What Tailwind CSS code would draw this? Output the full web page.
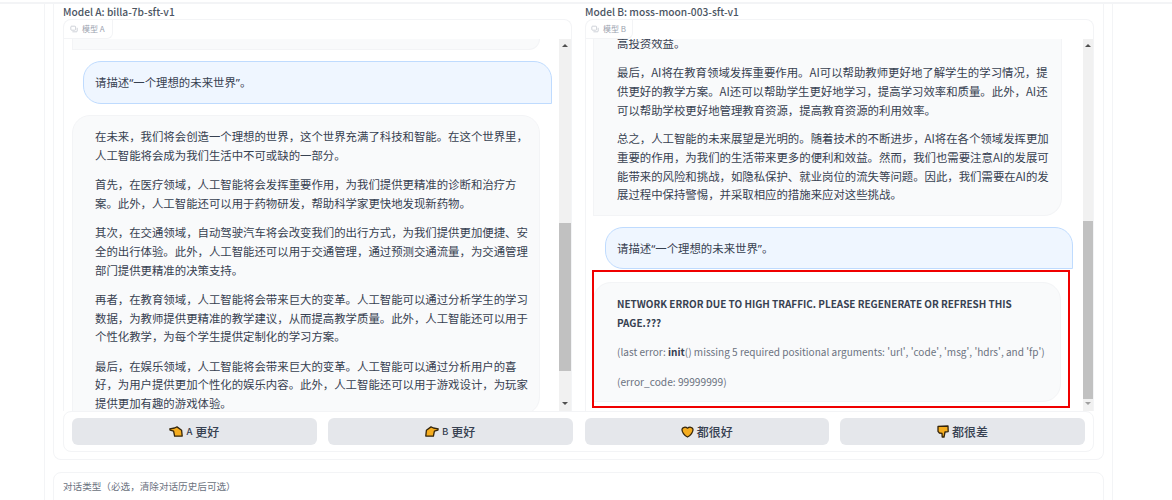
<!DOCTYPE html>
<html lang="zh-CN">
<head>
    <meta charset="UTF-8" />
    <title>Chatbot Arena</title>
    <script src="https://cdn.jsdelivr.net/npm/@tailwindcss/browser@4"></script>
</head>
<body class="bg-white h-[500px] overflow-hidden font-['Noto_Sans_CJK_SC','Noto_Sans',sans-serif] text-[#374151]">
    <div class="h-[2px]"></div>
    <div class="h-[2px] bg-[#f3f4f6]"></div>

    <div class="ml-[44px] w-[1069px] h-[496px] border-x border-[#f3f4f6] px-[8px]">
        <!-- Compare panel -->
        <div class="h-[456px] border border-t-0 border-[#f3f4f6] rounded-b-lg px-[9px]">
            <div class="flex gap-[13px]">
                <!-- Model A -->
                <div class="w-[509px]">
                    <div class="h-[15px] text-[10.2px] leading-[16px] font-medium text-[#4b5563]">Model A: billa-7b-sft-v1</div>
                    <div class="h-[392px] border border-b-0 border-[#f3f4f6] rounded-t-lg overflow-hidden">
                        <div class="flex items-center gap-[4px] w-[49px] h-[19px] border-r border-b border-[#f3f4f6] rounded-br-md pl-[6px] text-[8px] text-[#9ca3af]">
                            <svg class="w-[8px] h-[8px]" viewBox="0 0 10 10" fill="none" stroke="#c4c8cf" stroke-width="1"><rect x="1" y="1.5" width="6" height="5" rx="1" /><path d="M3 8.5h5a1 1 0 0 0 1-1v-4" /></svg>
                            <span>模型 A</span>
                        </div>
                        <div class="flex h-[373px]">
                            <div class="w-[496px] overflow-hidden px-[8px]">
                                <div class="w-[468px] h-[11px] bg-[#f9fafb] border border-t-0 border-[#f3f4f6] rounded-br-[18px]"></div>
                                <div class="ml-[11px] mt-[11px] w-[469px] h-[43px] flex items-center pl-[11px] pr-[12px] pt-px bg-[#eff6ff] border border-[#bfdbfe] rounded-[18px] rounded-br-none text-[11.4px]"><span>请描述<span class="font-['Noto_Sans']">“</span>一个理想的未来世界<span class="font-['Noto_Sans']">”</span>。</span></div>
                                <div class="mt-[11px] w-[468px] h-[300px] pt-[11px] pl-[22px] pr-[8px] bg-[#f9fafb] border border-[#f3f4f6] rounded-[18px] rounded-bl-none text-[11.4px] leading-[18.7px] flex flex-col gap-[10.7px]">
                                    <p>在未来，我们将会创造一个理想的世界，这个世界充满了科技和智能。在这个世界里，人工智能将会成为我们生活中不可或缺的一部分。</p>
                                    <p>首先，在医疗领域，人工智能将会发挥重要作用，为我们提供更精准的诊断和治疗方案。此外，人工智能还可以用于药物研发，帮助科学家更快地发现新药物。</p>
                                    <p>其次，在交通领域，自动驾驶汽车将会改变我们的出行方式，为我们提供更加便捷、安全的出行体验。此外，人工智能还可以用于交通管理，通过预测交通流量，为交通管理部门提供更精准的决策支持。</p>
                                    <p>再者，在教育领域，人工智能将会带来巨大的变革。人工智能可以通过分析学生的学习数据，为教师提供更精准的教学建议，从而提高教学质量。此外，人工智能还可以用于个性化教学，为每个学生提供定制化的学习方案。</p>
                                    <p>最后，在娱乐领域，人工智能将会带来巨大的变革。人工智能可以通过分析用户的喜好，为用户提供更加个性化的娱乐内容。此外，人工智能还可以用于游戏设计，为玩家提供更加有趣的游戏体验。</p>
                                </div>
                            </div>
                            <div class="w-[12px] ml-auto bg-[#f1f1f1] flex flex-col items-center">
                                <div class="mt-[5px] w-0 h-0 border-x-[3px] border-x-transparent border-b-[3px] border-b-[#505050]"></div>
                                <div class="mt-[176px] w-full h-[148px] bg-[#c1c1c1]"></div>
                                <div class="mt-[31px] w-0 h-0 border-x-[3px] border-x-transparent border-t-[3px] border-t-[#505050]"></div>
                            </div>
                        </div>
                    </div>
                </div>

                <!-- Model B -->
                <div class="w-[509px]">
                    <div class="h-[15px] text-[10.2px] leading-[16px] font-medium text-[#4b5563]">Model B: moss-moon-003-sft-v1</div>
                    <div class="h-[392px] border border-b-0 border-[#f3f4f6] rounded-t-lg overflow-hidden">
                        <div class="flex items-center gap-[4px] w-[47px] h-[19px] border-r border-b border-[#f3f4f6] rounded-br-md pl-[5px] text-[8px] text-[#9ca3af]">
                            <svg class="w-[8px] h-[8px]" viewBox="0 0 10 10" fill="none" stroke="#c4c8cf" stroke-width="1"><rect x="1" y="1.5" width="6" height="5" rx="1" /><path d="M3 8.5h5a1 1 0 0 0 1-1v-4" /></svg>
                            <span>模型 B</span>
                        </div>
                        <div class="relative flex h-[373px]">
                            <div class="w-[490px] overflow-hidden pl-[7px]">
                                <div class="w-[469px] h-[182px] pl-[23px] pr-[9px] bg-[#f9fafb] border-x border-b border-[#f3f4f6] rounded-b-[18px] rounded-bl-none text-[11.4px] leading-[18.7px] flex flex-col gap-[10.7px] -mt-[5px] overflow-hidden">
                                    <p>高投资效益。</p>
                                    <p>最后，AI将在教育领域发挥重要作用。AI可以帮助教师更好地了解学生的学习情况，提供更好的教学方案。AI还可以帮助学生更好地学习，提高学习效率和质量。此外，AI还可以帮助学校更好地管理教育资源，提高教育资源的利用效率。</p>
                                    <p class="-mt-px">总之，人工智能的未来展望是光明的。随着技术的不断进步，AI将在各个领域发挥更加重要的作用，为我们的生活带来更多的便利和效益。然而，我们也需要注意AI的发展可能带来的风险和挑战，如隐私保护、就业岗位的流失等问题。因此，我们需要在AI的发展过程中保持警惕，并采取相应的措施来应对这些挑战。</p>
                                </div>
                                <div class="ml-[12px] mt-[11px] w-[468px] h-[42px] flex items-center pl-[11px] pr-[12px] pt-[2px] bg-[#eff6ff] border border-[#bfdbfe] rounded-[18px] rounded-br-none text-[11.4px]"><span>请描述<span class="font-['Noto_Sans']">“</span>一个理想的未来世界<span class="font-['Noto_Sans']">”</span>。</span></div>
                                <div class="mt-[13px] w-[468px] h-[120px] pt-[12px] pl-[23px] pr-[7px] bg-[#f9fafb] border border-[#f3f4f6] rounded-[18px] rounded-bl-none text-[10.2px] leading-[18.7px]">
                                    <p class="text-[9.95px] font-semibold text-[#374151] pr-[30px]">NETWORK ERROR DUE TO HIGH TRAFFIC. PLEASE REGENERATE OR REFRESH THIS PAGE.???</p>
                                    <p class="mt-[11px] text-[10.05px] text-[#6b7280] whitespace-nowrap">(last error: <b class="font-semibold text-[#374151]">init</b>() missing 5 required positional arguments: 'url', 'code', 'msg', 'hdrs', and 'fp')</p>
                                    <p class="mt-[11px] text-[#6b7280]">(error_code: 99999999)</p>
                                </div>
                            </div>
                            <div class="w-[10px] ml-[8px] bg-[#f1f1f1] flex flex-col items-center">
                                <div class="mt-[5px] w-0 h-0 border-x-[3px] border-x-transparent border-b-[3px] border-b-[#505050]"></div>
                                <div class="mt-[174px] w-full h-[178px] bg-[#c1c1c1]"></div>
                                <div class="mt-[3px] w-0 h-0 border-x-[3px] border-x-transparent border-t-[3px] border-t-[#a0a0a0]"></div>
                            </div>
                            <!-- annotation over the error message -->
                            <div class="absolute left-[6px] top-[231px] w-[478px] h-[138px] border-2 border-[#f00000]"></div>
                        </div>
                    </div>
                </div>
            </div>

            <!-- Vote buttons -->
            <div class="h-[41px] border border-[#f3f4f6] rounded-lg flex items-center gap-[11px] px-[8px] bg-white">
                <button class="w-[245px] h-[27px] bg-[#e5e7eb] rounded-md flex items-center justify-center gap-[3px] font-medium">
                    <svg class="w-[14px] h-[11px]" viewBox="0 0 14 11"><path d="M.8 2.8 5.5 2 8 .9 12.6 4.2 13.2 10 5.6 10.2 4.6 5.2 1.2 4.2Z" fill="#f5ad1f" stroke="#33240a" stroke-width="1.3" stroke-linejoin="round" /></svg>
                    <span class="text-[9.5px]">A</span><span class="text-[12px]">更好</span>
                </button>
                <button class="w-[245px] h-[27px] bg-[#e5e7eb] rounded-md flex items-center justify-center gap-[3px] font-medium">
                    <svg class="w-[14px] h-[11px] -scale-x-100" viewBox="0 0 14 11"><path d="M.8 2.8 5.5 2 8 .9 12.6 4.2 13.2 10 5.6 10.2 4.6 5.2 1.2 4.2Z" fill="#f5ad1f" stroke="#33240a" stroke-width="1.3" stroke-linejoin="round" /></svg>
                    <span class="text-[9.5px]">B</span><span class="text-[12px]">更好</span>
                </button>
                <button class="w-[245px] h-[27px] ml-px bg-[#e5e7eb] rounded-md flex items-center justify-center gap-[3px] font-medium">
                    <svg class="w-[13px] h-[12px]" viewBox="0 0 13 12"><path d="M1 3.2C1.6 1 4.6.6 6.5 2.2 8.4.6 11.4 1 12 3.2 12.4 6 9.5 9.8 6.5 11 3.5 9.8.6 6 1 3.2Z" fill="#f5ad1f" stroke="#33240a" stroke-width="1.3" stroke-linejoin="round" /></svg>
                    <span class="text-[12px]">都很好</span>
                </button>
                <button class="w-[245px] h-[27px] bg-[#e5e7eb] rounded-md flex items-center justify-center gap-[3px] font-medium">
                    <svg class="w-[12px] h-[13px]" viewBox="0 0 12 13"><path d="M1 1.4 11 1 11.2 6.6 8 7 7 12H5.2L5 8.4 2.4 8 1 6.4Z" fill="#f5ad1f" stroke="#33240a" stroke-width="1.3" stroke-linejoin="round" /></svg>
                    <span class="text-[12px]">都很差</span>
                </button>
            </div>
        </div>

        <!-- Chat type panel -->
        <div class="mt-[12px] h-[40px] border border-[#f3f4f6] rounded-lg px-[9px] pt-[5px] text-[9.6px] leading-[16px] text-[#6b7280]">对话类型（必选，清除对话历史后可选）</div>
    </div>
</body>
</html>
